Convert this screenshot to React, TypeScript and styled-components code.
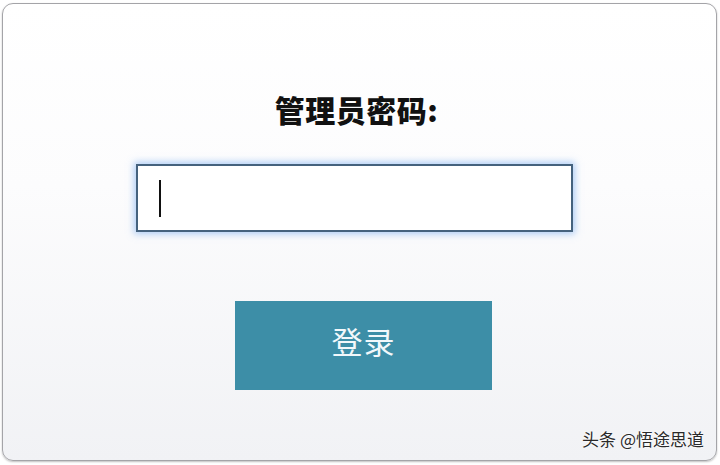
import * as React from "react"
import styled, { createGlobalStyle } from "styled-components"

const GlobalStyle = createGlobalStyle`
  html, body {
    margin: 0;
    padding: 0;
    background: #ffffff;
  }
  body {
    font-family: "Noto Sans CJK SC", "Noto Sans", sans-serif;
  }
`

const Page = styled.div`
  width: 720px;
  height: 465px;
  padding: 3px 3px 4px 2px;
  box-sizing: border-box;
  display: flex;
`

const Card = styled.div`
  flex: 1;
  display: flex;
  flex-direction: column;
  align-items: center;
  box-sizing: border-box;
  padding-top: 85px;
  border: 1px solid #a4a4a8;
  border-radius: 11px;
  background: linear-gradient(180deg, #ffffff 0%, #fcfcfd 40%, #f1f2f5 100%);
  box-shadow: 0 1px 2px rgba(0, 0, 0, 0.25);
`

const Title = styled.h1`
  margin: 0 6px 0 0;
  font-size: 30px;
  line-height: 40px;
  font-weight: 900;
  color: #111111;
  letter-spacing: 0.5px;
`

const Field = styled.div`
  margin: 35px 10px 0 0;
  width: 437px;
  height: 68px;
  box-sizing: border-box;
  border: 2px solid #45627e;
  background: #ffffff;
  box-shadow: 0 0 7px 2px rgba(110, 165, 240, 0.55);
  display: flex;
  align-items: center;
  padding-left: 21px;
`

const Caret = styled.span`
  width: 2px;
  height: 37px;
  background: #111111;
`

const LoginButton = styled.button`
  margin: 69px 0 0 8px;
  width: 257px;
  height: 89px;
  border: none;
  background: #3d8ea7;
  color: #f2f8fb;
  font-family: "Noto Sans CJK SC", sans-serif;
  font-size: 31px;
  font-weight: 400;
  letter-spacing: 1px;
  padding: 0 0 10px;
  cursor: pointer;
`

const Watermark = styled.div`
  margin-top: auto;
  margin-bottom: 10px;
  margin-right: 12px;
  align-self: flex-end;
  font-size: 17px;
  line-height: 22px;
  color: #2a2a2a;
  text-shadow: 0 0 2px #ffffff, 0 0 2px #ffffff;
`

export default function App() {
  return (
    <>
      <GlobalStyle />
      <Page>
        <Card>
          <Title>管理员密码:</Title>
          <Field>
            <Caret />
          </Field>
          <LoginButton>登录</LoginButton>
          <Watermark>头条 @悟途思道</Watermark>
        </Card>
      </Page>
    </>
  )
}
